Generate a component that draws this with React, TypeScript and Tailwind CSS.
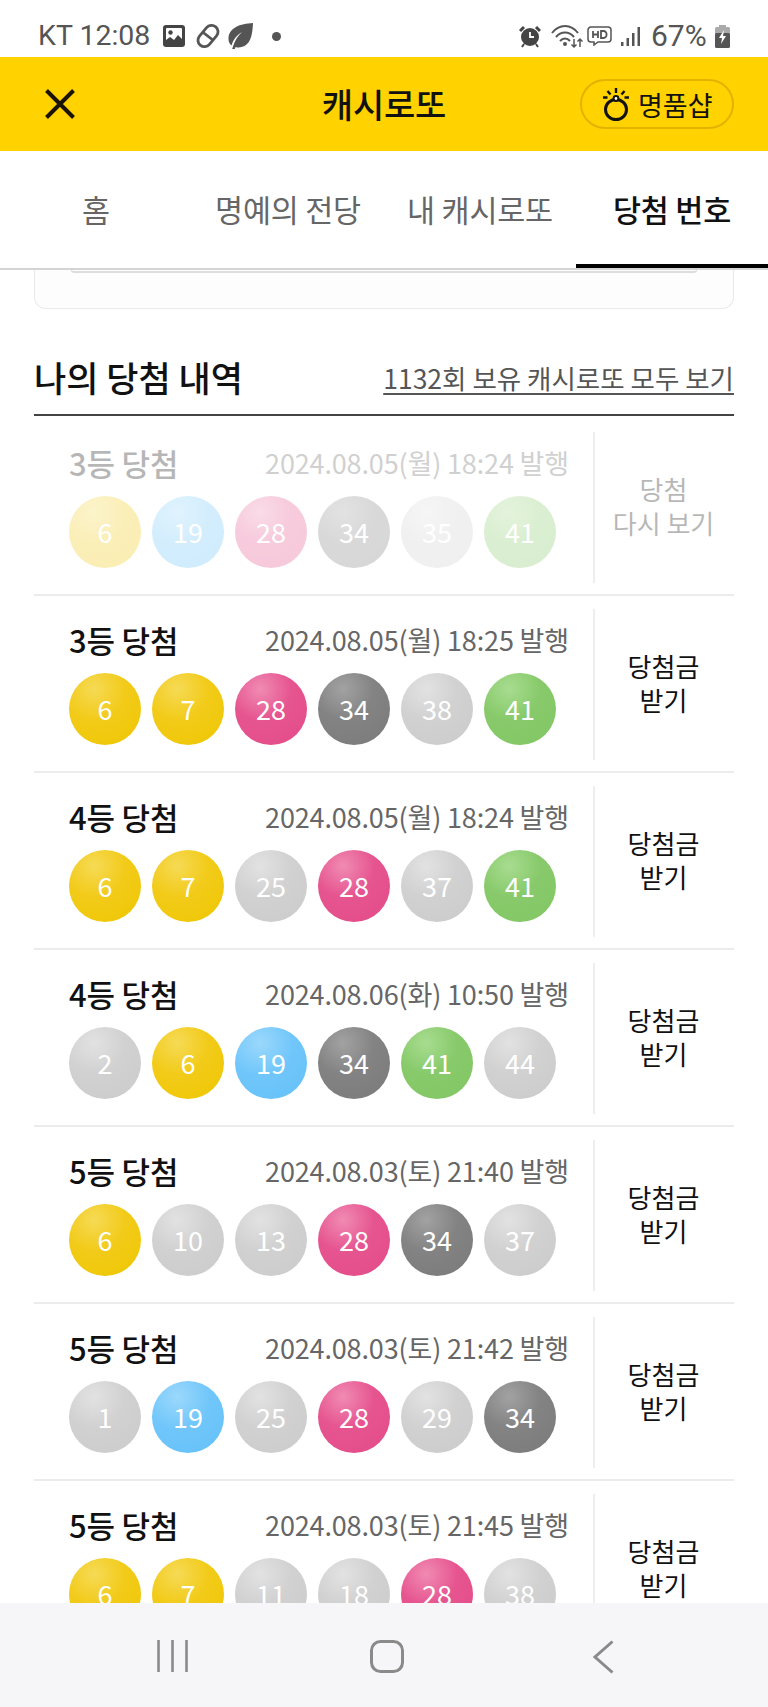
import React from "react";

type Tone = "y" | "b" | "p" | "d" | "g" | "n";

const toneClass: Record<Tone, string> = {
  y: "bg-[radial-gradient(circle_at_35%_22%,#f6da55_0%,#f2cb1a_42%,#efc600_100%)]",
  b: "bg-[radial-gradient(circle_at_35%_22%,#9bd8fc_0%,#70c6fa_45%,#64c1f8_100%)]",
  p: "bg-[radial-gradient(circle_at_35%_22%,#f08bb3_0%,#e65590_42%,#e34b88_100%)]",
  d: "bg-[radial-gradient(circle_at_35%_22%,#a2a2a2_0%,#838383_42%,#7a7a7a_100%)]",
  g: "bg-[radial-gradient(circle_at_35%_22%,#e2e2e2_0%,#d1d1d1_42%,#cbcbcb_100%)]",
  n: "bg-[radial-gradient(circle_at_35%_22%,#a8dc90_0%,#88ca6b_42%,#82c664_100%)]",
};

type Row = {
  rank: string;
  date: string;
  balls: [number, Tone][];
  action: [string, string];
  faded?: boolean;
};

const rows: Row[] = [
  { rank: "3등 당첨", date: "2024.08.05(월) 18:24 발행", balls: [[6, "y"], [19, "b"], [28, "p"], [34, "d"], [35, "g"], [41, "n"]], action: ["당첨", "다시 보기"], faded: true },
  { rank: "3등 당첨", date: "2024.08.05(월) 18:25 발행", balls: [[6, "y"], [7, "y"], [28, "p"], [34, "d"], [38, "g"], [41, "n"]], action: ["당첨금", "받기"] },
  { rank: "4등 당첨", date: "2024.08.05(월) 18:24 발행", balls: [[6, "y"], [7, "y"], [25, "g"], [28, "p"], [37, "g"], [41, "n"]], action: ["당첨금", "받기"] },
  { rank: "4등 당첨", date: "2024.08.06(화) 10:50 발행", balls: [[2, "g"], [6, "y"], [19, "b"], [34, "d"], [41, "n"], [44, "g"]], action: ["당첨금", "받기"] },
  { rank: "5등 당첨", date: "2024.08.03(토) 21:40 발행", balls: [[6, "y"], [10, "g"], [13, "g"], [28, "p"], [34, "d"], [37, "g"]], action: ["당첨금", "받기"] },
  { rank: "5등 당첨", date: "2024.08.03(토) 21:42 발행", balls: [[1, "g"], [19, "b"], [25, "g"], [28, "p"], [29, "g"], [34, "d"]], action: ["당첨금", "받기"] },
  { rank: "5등 당첨", date: "2024.08.03(토) 21:45 발행", balls: [[6, "y"], [7, "y"], [11, "g"], [18, "g"], [28, "p"], [38, "g"]], action: ["당첨금", "받기"] },
];

function StatusBar() {
  return (
    <div className="h-[57px] shrink-0 bg-white flex items-center justify-between pl-[38px] pr-[38px] pt-[15px] text-[#555555]">
      <div className="flex items-center">
        <span className="font-['Roboto',sans-serif] text-[28.5px] leading-none w-[125px] whitespace-nowrap">KT 12:08</span>
        <svg width="22" height="22" viewBox="0 0 22 22" className="mr-[10px]">
          <rect width="22" height="22" rx="3" fill="#444" />
          <rect x="3" y="3" width="16" height="16" rx="1" fill="#fff" />
          <circle cx="7.5" cy="7.5" r="2.2" fill="#444" />
          <path d="M3 19v-4l4-3 4 3 4-5 4 4v5z" fill="#444" />
        </svg>
        <svg width="26" height="26" viewBox="0 0 26 26" fill="none" stroke="#555" strokeWidth="2.8" className="mr-[6px]">
          <rect x="-6.500" y="-12" width="13" height="24" rx="6.500" transform="translate(13 13) rotate(40)" />
          <path d="M7.500 9l11 8.500" />
        </svg>
        <svg width="26" height="26" viewBox="0 0 26 26" className="mr-[19px]">
          <path d="M26 0C13 .5 2 5 1.500 15c-.2 3.500 1 6 3 7.500C6.500 16 10 12 15 9c-4 4-7 8-9 14.500l-.8 2.500 2.500.5.800-2.500c3 1 6 .5 9-1C24.500 19 25.500 10 26 0z" fill="#555" />
        </svg>
        <span className="w-[9px] h-[9px] rounded-full bg-[#555555]" />
      </div>
      <div className="flex items-center">
        <svg width="22" height="23" viewBox="0 0 22 23" className="mr-[10px]">
          <circle cx="11" cy="12" r="9" fill="#444" />
          <path d="M11 7v5h4" stroke="#fff" strokeWidth="1.800" fill="none" />
          <path d="M1 6l4-4M21 6l-4-4" stroke="#444" strokeWidth="3" />
          <path d="M5 19l-2 3M17 19l2 3" stroke="#444" strokeWidth="2" />
        </svg>
        <svg width="32" height="25" viewBox="0 0 32 25" fill="none" stroke="#555" className="mr-[4px]">
          <path d="M1 9c7-9.500 19-9.500 26 0" strokeWidth="2" />
          <path d="M5 13c5-6 13-6 18 0" strokeWidth="2" />
          <path d="M9 17c3-3.500 7-3.500 10 0" strokeWidth="2" />
          <circle cx="14" cy="20" r="2" fill="#555" stroke="none" />
          <path d="M23 15v8M20.500 20.500l2.500 2.500 2.500-2.500M29 23v-8M26.500 17.500l2.500-2.500 2.500 2.500" strokeWidth="1.500" />
        </svg>
        <svg width="25" height="20" viewBox="0 0 25 20" fill="none" stroke="#555" className="mr-[9px]">
          <path d="M4 1h17a3 3 0 0 1 3 3v9a3 3 0 0 1-3 3H11l-4 3v-3H4a3 3 0 0 1-3-3V4a3 3 0 0 1 3-3z" strokeWidth="1.500" />
          <path d="M6 5v7M11 5v7M6 8.500h5" strokeWidth="1.800" />
          <path d="M14 5v7h2.500a3 3 0 0 0 3-3.500 3 3 0 0 0-3-3.500z" strokeWidth="1.800" />
        </svg>
        <svg width="19" height="19" viewBox="0 0 19 19" fill="#555" className="mr-[11px]">
          <rect x="0" y="15" width="2.500" height="4" />
          <rect x="5.500" y="11" width="2.500" height="8" />
          <rect x="11" y="6" width="2.500" height="13" />
          <rect x="16.500" y="0" width="2.500" height="19" />
        </svg>
        <span className="font-['Roboto',sans-serif] text-[30px] leading-none w-[64px] whitespace-nowrap">67%</span>
        <svg width="15" height="23" viewBox="0 0 15 23">
          <rect x="4" y="0" width="7" height="3" fill="#aaa" />
          <rect x="0" y="2" width="15" height="8" rx="1.500" fill="#aaa" />
          <rect x="0" y="8" width="15" height="15" rx="1.500" fill="#555" />
          <path d="M9 5L4 13h3l-1 6 5-8H8z" fill="#fff" />
        </svg>
      </div>
    </div>
  );
}

function TopBar() {
  return (
    <div className="h-[94px] shrink-0 bg-[#ffd200] grid grid-cols-[1fr_auto_1fr] items-center px-[34px]">
      <svg width="30" height="30" viewBox="0 0 30 30" fill="none" stroke="#1a1405" strokeWidth="4" className="ml-[11px]">
        <path d="M1.500 1.500l27 27M28.500 1.500l-27 27" />
      </svg>
      <h1 className="text-[34px] leading-none font-medium text-[#111111] tracking-[-0.2px]">캐시로또</h1>
      <div className="justify-self-end w-[154px] h-[50px] rounded-full border-2 border-[#e2b300] flex items-center pl-[21px]">
        <svg width="26" height="33" viewBox="0 0 26 33" fill="none" stroke="#111" className="mr-[9px] shrink-0">
          <ellipse cx="13" cy="21.500" rx="10.500" ry="10" strokeWidth="3" />
          <circle cx="13" cy="10.500" r="2.400" fill="#fff" strokeWidth="2" />
          <path d="M13 0v5M4.500 3l3 3.500M21.500 3l-3 3.500M0 9.500h4.500M26 9.500h-4.500" strokeWidth="2.400" />
        </svg>
        <span className="text-[27px] leading-none text-[#111111] whitespace-nowrap">명품샵</span>
      </div>
    </div>
  );
}

function Tabs() {
  const tabs = ["홈", "명예의 전당", "내 캐시로또", "당첨 번호"];
  return (
    <div className="h-[119px] shrink-0 bg-white border-b-2 border-[#d4d4d4] grid grid-cols-4">
      {tabs.map((t, i) => (
        <div
          key={t}
          className={
            i === 3
              ? "flex items-center justify-center text-[30.5px] font-medium text-[#111111] border-b-4 border-black pt-[4px]"
              : "flex items-center justify-center text-[30.5px] text-[#666666]"
          }
        >
          <span className="whitespace-nowrap leading-none tracking-[-0.2px]">{t}</span>
        </div>
      ))}
    </div>
  );
}

function Ball({ n, tone }: { n: number; tone: Tone }) {
  return (
    <div className={`w-[72px] h-[72px] shrink-0 rounded-full flex items-center justify-center pb-[2px] text-white text-[27px] leading-none ${toneClass[tone]}`}>
      {n}
    </div>
  );
}

function DrawRow({ row }: { row: Row }) {
  return (
    <div className="h-[177px] shrink-0 border-b-2 border-[#ececec] flex pt-[13px] pb-[11px]">
      <div className="w-[561px] shrink-0 pl-[35px] pr-[24px] border-r-2 border-[#eeeeee]">
        <div className={row.faded ? "opacity-30" : ""}>
          <div className="h-[64px] pb-[4px] flex items-center justify-between">
            <span className="text-[31px] leading-none font-medium text-[#111111] whitespace-nowrap tracking-[-0.2px]">{row.rank}</span>
            <span className="text-[27px] leading-none text-[#666666] whitespace-nowrap tracking-[-0.15px]">{row.date}</span>
          </div>
          <div className="flex gap-[11px]">
            {row.balls.map(([n, tone], i) => (
              <Ball key={i} n={n} tone={tone} />
            ))}
          </div>
        </div>
      </div>
      <div className={`flex-1 flex flex-col items-center justify-center pr-[2px] pb-[4px] text-[26px] leading-[34px] text-[#111111] ${row.faded ? "opacity-30" : ""}`}>
        <span className="whitespace-nowrap">{row.action[0]}</span>
        <span className="whitespace-nowrap">{row.action[1]}</span>
      </div>
    </div>
  );
}

function NavBar() {
  return (
    <div className="h-[104px] shrink-0 bg-[#f6f6f8] relative z-10 flex items-start pt-[37px]">
      <div className="flex-1 flex justify-center">
        <svg width="31" height="32" viewBox="0 0 31 32" fill="none" stroke="#8a8a8a" strokeWidth="2.600" className="ml-[88px]">
          <path d="M1.500 0v32M15.500 0v32M29.500 0v32" />
        </svg>
      </div>
      <div className="flex-1 flex justify-center">
        <svg width="34" height="33" viewBox="0 0 34 33" fill="none" stroke="#8a8a8a" strokeWidth="3" className="ml-[6px]">
          <rect x="1.500" y="1.500" width="31" height="30" rx="9" />
        </svg>
      </div>
      <div className="flex-1 flex justify-center">
        <svg width="21" height="34" viewBox="0 0 21 34" fill="none" stroke="#8a8a8a" strokeWidth="3" className="mr-[74px]">
          <path d="M19.500 1.500L2 17l17.500 15.500" />
        </svg>
      </div>
    </div>
  );
}

export default function App() {
  return (
    <div className="w-[768px] h-[1707px] overflow-hidden flex flex-col bg-white font-['Noto_Sans_CJK_KR','Noto_Sans',sans-serif]">
      <StatusBar />
      <TopBar />
      <Tabs />
      <main className="flex-1 min-h-0 overflow-hidden px-[34px]">
        <div className="h-[39px] border-x border-b border-[#eaeaea] rounded-b-xl bg-[#fdfdfd] px-[36px]">
          <div className="h-[3px] border-x border-b-2 border-[#dddddd] rounded-b" />
        </div>
        <div className="mt-[33px] h-[74px] flex items-center justify-between border-b-2 border-[#444444]">
          <h2 className="text-[35px] leading-none font-medium text-[#111111] whitespace-nowrap pb-[3px]">나의 당첨 내역</h2>
          <a className="text-[26.5px] leading-none text-[#555555] underline underline-offset-4 whitespace-nowrap">1132회 보유 캐시로또 모두 보기</a>
        </div>
        <div className="mt-[3px]">
          {rows.map((r, i) => (
            <DrawRow key={i} row={r} />
          ))}
        </div>
      </main>
      <NavBar />
    </div>
  );
}
